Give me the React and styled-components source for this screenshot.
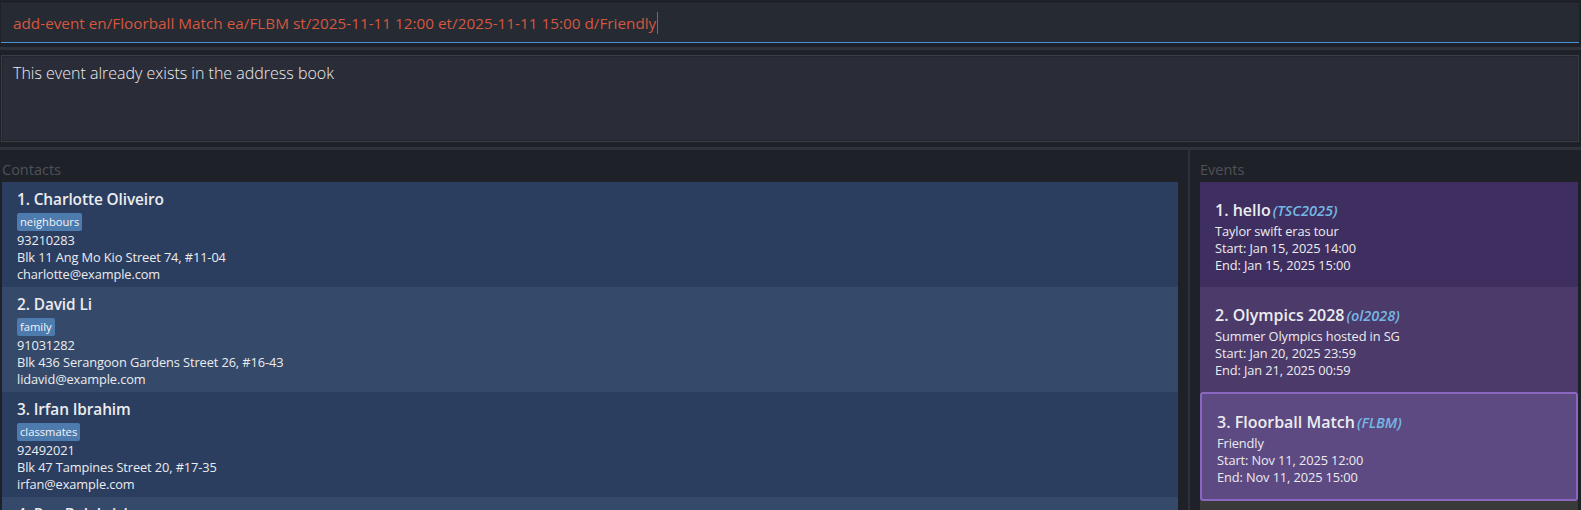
import React from "react";
import styled, { createGlobalStyle } from "styled-components";

const Global = createGlobalStyle`
  html, body { margin: 0; padding: 0; background: #1f2128; }
  body { font-family: "Open Sans", "Noto Sans", sans-serif; }
  * { box-sizing: border-box; }
`;

const Window = styled.div`
  width: 1581px;
  height: 510px;
  background: #1f2128;
  display: flex;
  flex-direction: column;
  overflow: hidden;
`;

const CommandArea = styled.div`
  padding: 3px 2px 0 1px;
  height: 43px;
`;

const CommandBox = styled.div`
  height: 40px;
  background: #262a33;
  border-top: 1px solid #2b2e37;
  border-bottom: 1px solid #4a8fd4;
  display: flex;
  align-items: center;
  padding-left: 12px;
  color: #d4573f;
  font-size: 15.3px;
  white-space: nowrap;
`;

const Caret = styled.span`
  display: inline-block;
  width: 1px;
  height: 22px;
  background: #c0503c;
  margin-left: 1px;
`;

const HDivider = styled.div`
  height: 3px;
  margin-top: ${(p) => p.$top}px;
  background: #2f323a;
  flex-shrink: 0;
`;

const ResultArea = styled.div`
  padding: 5px 2px 0 1px;
`;

const ResultBox = styled.div`
  height: 87px;
  background: #2a2d38;
  border: 1px solid #3a3d46;
  box-shadow: inset 0 0 0 1px #23262e;
  padding: 6px 11px;
  color: #ececee;
  font-size: 16px;
  font-weight: 300;
`;

const Bottom = styled.div`
  flex: 1;
  display: flex;
  min-height: 0;
`;

const Pane = styled.div`
  display: flex;
  flex-direction: column;
  width: ${(p) => p.$width}px;
  padding: ${(p) => p.$pad};
  min-height: 0;
`;

const VSplit = styled.div`
  width: 12px;
  border-right: 2px solid #2d3038;
  flex-shrink: 0;
`;

const PaneLabel = styled.div`
  height: 32px;
  padding-top: 11px;
  color: #4e5158;
  font-size: 14.5px;
  line-height: 18px;
`;

const List = styled.div`
  flex: 1;
  background: ${(p) => p.$bg};
  overflow: hidden;
`;

const ContactRow = styled.div`
  height: 105px;
  background: ${(p) => (p.$alt ? "#354a6a" : "#2b3e5f")};
  padding: 7px 15px 0;
  color: #ececef;
`;

const Name = styled.div`
  font-size: 15.4px;
  font-weight: 600;
  line-height: 22px;
  letter-spacing: -0.1px;
`;

const Tags = styled.div`
  display: flex;
  gap: 4px;
  margin: 2px 0 1px;
`;

const Tag = styled.span`
  background: #4e7bad;
  color: #f2f4f8;
  font-size: 11.2px;
  line-height: 18px;
  height: 18px;
  padding: 0 3px;
  border-radius: 2px;
`;

const Line = styled.div`
  font-size: 12.8px;
  line-height: 17px;
  letter-spacing: -0.1px;
`;

const EventCard = styled.div`
  height: ${(p) => (p.$selected ? 109 : 105)}px;
  background: ${(p) => p.$bg};
  border: ${(p) => (p.$selected ? "2px solid #8a68c2" : "none")};
  border-radius: ${(p) => (p.$selected ? "3px" : "0")};
  padding: 17px 15px 0;
  color: #ececef;
`;

const EventTitle = styled.div`
  display: flex;
  align-items: baseline;
  font-size: 16px;
  font-weight: 600;
  line-height: 22px;
  margin-bottom: 1px;
`;

const Alias = styled.span`
  color: #74b8e2;
  font-style: italic;
  font-size: 14.5px;
  margin-left: 2px;
`;

const contacts = [
  {
    name: "Charlotte Oliveiro",
    tag: "neighbours",
    phone: "93210283",
    address: "Blk 11 Ang Mo Kio Street 74, #11-04",
    email: "charlotte@example.com",
  },
  {
    name: "David Li",
    tag: "family",
    phone: "91031282",
    address: "Blk 436 Serangoon Gardens Street 26, #16-43",
    email: "lidavid@example.com",
  },
  {
    name: "Irfan Ibrahim",
    tag: "classmates",
    phone: "92492021",
    address: "Blk 47 Tampines Street 20, #17-35",
    email: "irfan@example.com",
  },
  {
    name: "Roy Balakrishnan",
    tag: "colleagues",
    phone: "92624417",
    address: "Blk 45 Aljunied Street 85, #11-31",
    email: "royb@example.com",
  },
];

const events = [
  {
    title: "hello",
    alias: "TSC2025",
    desc: "Taylor swift eras tour",
    start: "Jan 15, 2025 14:00",
    end: "Jan 15, 2025 15:00",
    bg: "#3e2f60",
  },
  {
    title: "Olympics 2028",
    alias: "ol2028",
    desc: "Summer Olympics hosted in SG",
    start: "Jan 20, 2025 23:59",
    end: "Jan 21, 2025 00:59",
    bg: "#4b3a6a",
  },
  {
    title: "Floorball Match",
    alias: "FLBM",
    desc: "Friendly",
    start: "Nov 11, 2025 12:00",
    end: "Nov 11, 2025 15:00",
    bg: "#5d4a82",
    selected: true,
  },
];

export default function App() {
  return (
    <>
      <Global />
      <Window>
        <CommandArea>
          <CommandBox>
            add-event en/Floorball Match ea/FLBM st/2025-11-11 12:00 et/2025-11-11 15:00 d/Friendly
            <Caret />
          </CommandBox>
        </CommandArea>
        <HDivider $top={4} />
        <ResultArea>
          <ResultBox>This event already exists in the address book</ResultBox>
        </ResultArea>
        <HDivider $top={5} />
        <Bottom>
          <Pane $width={1178} $pad="0 0 0 2px">
            <PaneLabel>Contacts</PaneLabel>
            <List $bg="#2b3e5f">
              {contacts.map((c, i) => (
                <ContactRow key={c.name} $alt={i % 2 === 1}>
                  <Name>
                    {i + 1}. {c.name}
                  </Name>
                  <Tags>
                    <Tag>{c.tag}</Tag>
                  </Tags>
                  <Line>{c.phone}</Line>
                  <Line>{c.address}</Line>
                  <Line>{c.email}</Line>
                </ContactRow>
              ))}
            </List>
          </Pane>
          <VSplit />
          <Pane $width={391} $pad="0 3px 0 10px">
            <PaneLabel>Events</PaneLabel>
            <List $bg="#3a3a3a">
              {events.map((e, i) => (
                <EventCard key={e.alias} $bg={e.bg} $selected={e.selected}>
                  <EventTitle>
                    {i + 1}. {e.title}
                    <Alias>({e.alias})</Alias>
                  </EventTitle>
                  <Line>{e.desc}</Line>
                  <Line>Start: {e.start}</Line>
                  <Line>End: {e.end}</Line>
                </EventCard>
              ))}
            </List>
          </Pane>
        </Bottom>
      </Window>
    </>
  );
}
